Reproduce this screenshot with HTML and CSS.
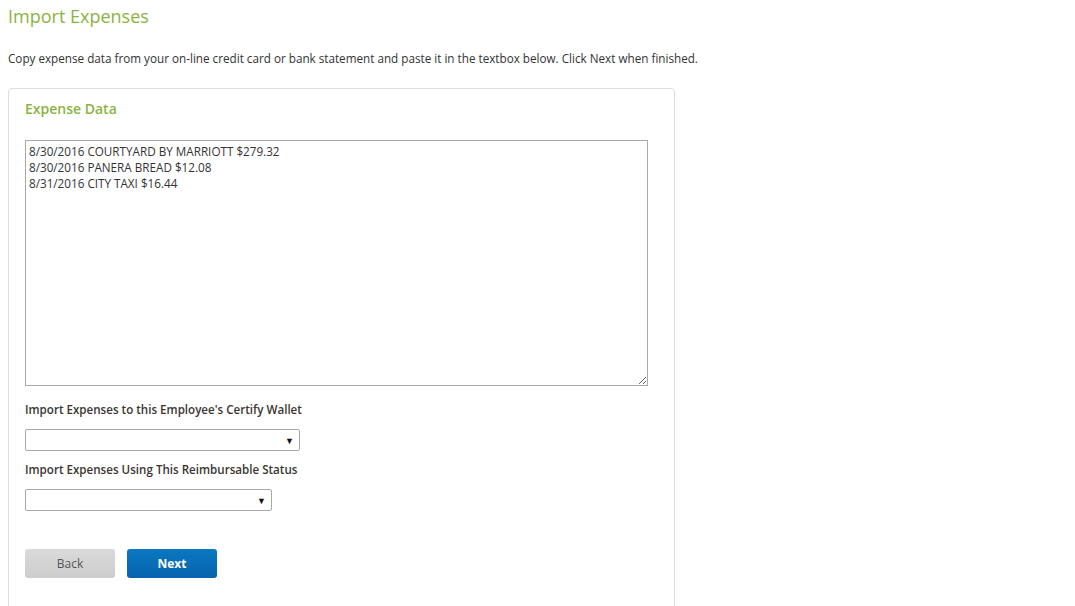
FILE: index.html
```html
<!DOCTYPE html>
<html>
<head>
<meta charset="utf-8">
<link rel="stylesheet" href="styles.css">
</head>
<body>
<h1 class="title">Import Expenses</h1>
<p class="intro">Copy expense data from your on-line credit card or bank statement and paste it in the textbox below. Click Next when finished.</p>
<div class="panel">
  <h2 class="panel-title">Expense Data</h2>
  <textarea class="data" spellcheck="false">8/30/2016 COURTYARD BY MARRIOTT $279.32
8/30/2016 PANERA BREAD $12.08
8/31/2016 CITY TAXI $16.44</textarea>
  <label class="field-label">Import Expenses to this Employee's Certify Wallet</label>
  <div class="select select-wide"><span class="arrow">&#9660;</span></div>
  <label class="field-label field-label-next">Import Expenses Using This Reimbursable Status</label>
  <div class="select select-narrow"><span class="arrow">&#9660;</span></div>
  <div class="buttons">
    <button class="btn btn-back">Back</button>
    <button class="btn btn-next">Next</button>
  </div>
</div>
</body>
</html>
```
FILE: styles.css
```css
html, body {
  margin: 0;
  padding: 0;
  background: #fff;
}
body {
  padding: 0 8px;
  font-family: "Open Sans", "Liberation Sans", sans-serif;
  color: #333;
  font-size: 12px;
}
.title {
  margin: 0;
  padding-top: 4px;
  font-size: 18px;
  font-weight: 400;
  line-height: 25px;
  color: #8ab440;
}
.intro {
  margin: 0;
  padding-top: 21px;
  line-height: 17px;
  font-size: 11.7px;
  color: #333;
}
.panel {
  margin-top: 21px;
  width: 633px;
  height: 540px;
  border: 1px solid #dedede;
  border-radius: 4px;
  padding: 0 16px;
  display: flex;
  flex-direction: column;
  align-items: flex-start;
}
.panel-title {
  margin: 0;
  padding-top: 10px;
  font-size: 14px;
  font-weight: 600;
  line-height: 20px;
  color: #8ab440;
}
.data {
  margin-top: 21px;
  width: 623px;
  height: 246px;
  box-sizing: border-box;
  border: 1px solid #a9a9a9;
  padding: 2px 3px;
  font-family: "Open Sans", "Liberation Sans", sans-serif;
  font-size: 11.7px;
  line-height: 16px;
  color: #333;
  resize: both;
  outline: none;
}
.field-label {
  margin-top: 15px;
  font-size: 11.6px;
  font-weight: 600;
  line-height: 17px;
  color: #3a3530;
}
.field-label-next {
  margin-top: 10px;
}
.select {
  margin-top: 11px;
  height: 22px;
  box-sizing: border-box;
  border: 1px solid #a9a9a9;
  border-radius: 2px;
  display: flex;
  align-items: center;
  justify-content: flex-end;
  padding-right: 5px;
}
.select-wide { width: 275px; }
.select-narrow { width: 247px; }
.arrow {
  font-size: 9px;
  color: #111;
  line-height: 1;
}
.buttons {
  margin-top: 38px;
  display: flex;
  gap: 12px;
}
.btn {
  width: 90px;
  height: 29px;
  border: none;
  border-radius: 3px;
  font-family: "Open Sans", "Liberation Sans", sans-serif;
  font-size: 12px;
  padding: 0;
}
.btn-back {
  background: linear-gradient(#dadada, #cdcdcd);
  color: #555;
}
.btn-next {
  background: linear-gradient(#0a78c2, #0863ad);
  color: #fff;
  font-weight: 700;
}
```
